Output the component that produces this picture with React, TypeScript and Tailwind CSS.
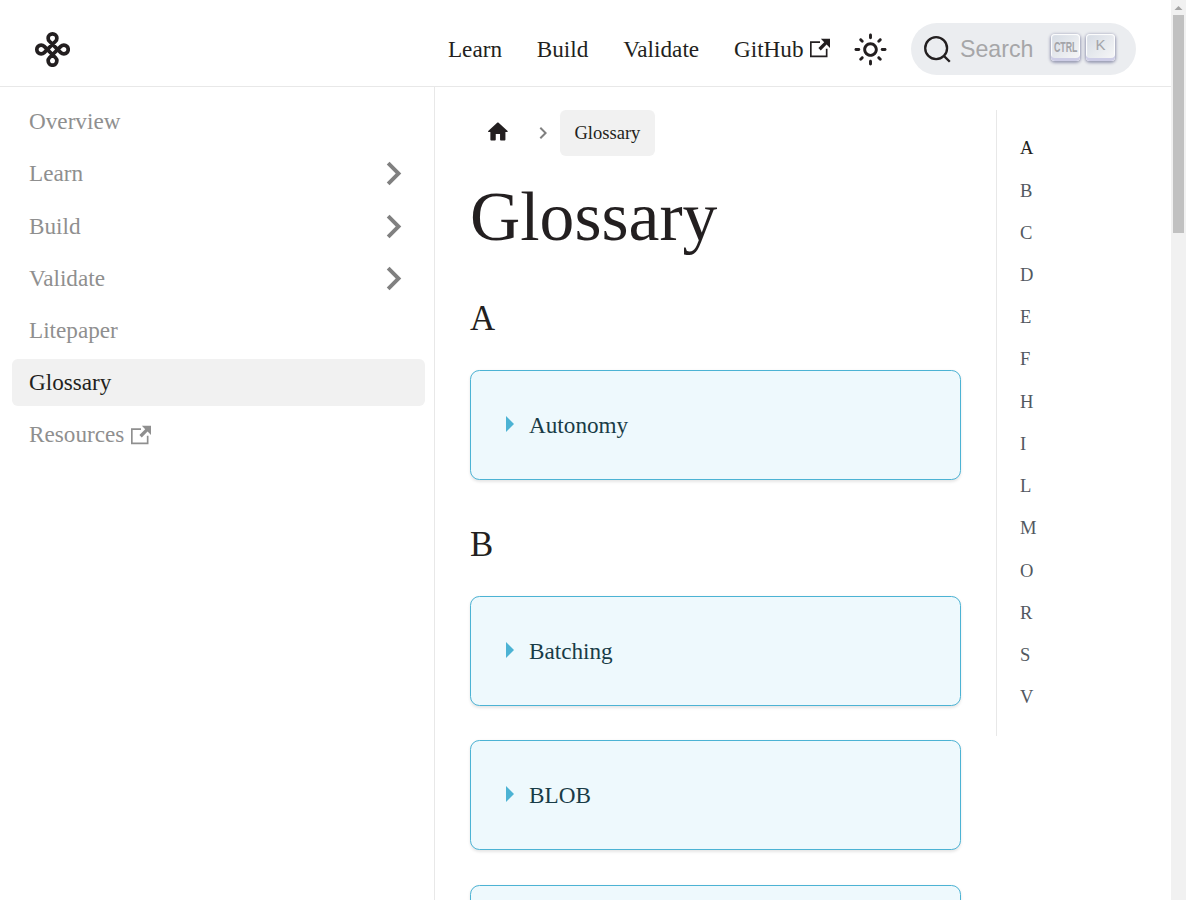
import React from "react";

const SUN =
  "M12,9c1.65,0,3,1.35,3,3s-1.35,3-3,3s-3-1.35-3-3S10.35,9,12,9 M12,7c-2.76,0-5,2.24-5,5s2.24,5,5,5s5-2.24,5-5 S14.76,7,12,7L12,7z M2,13l2,0c0.55,0,1-0.45,1-1s-0.45-1-1-1l-2,0c-0.55,0-1,0.45-1,1S1.45,13,2,13z M20,13l2,0c0.55,0,1-0.45,1-1 s-0.45-1-1-1l-2,0c-0.55,0-1,0.45-1,1S19.45,13,20,13z M11,2v2c0,0.55,0.45,1,1,1s1-0.45,1-1V2c0-0.55-0.45-1-1-1S11,1.45,11,2z M11,20v2c0,0.55,0.45,1,1,1s1-0.45,1-1v-2c0-0.55-0.45-1-1-1C11.45,19,11,19.45,11,20z M5.99,4.58c-0.39-0.39-1.03-0.39-1.41,0 c-0.39,0.39-0.39,1.03,0,1.41l1.06,1.06c0.39,0.39,1.03,0.39,1.41,0s0.39-1.03,0-1.41L5.99,4.58z M18.36,16.95 c-0.39-0.39-1.03-0.39-1.41,0c-0.39,0.39-0.39,1.03,0,1.41l1.06,1.06c0.39,0.39,1.03,0.39,1.41,0c0.39-0.39,0.39-1.03,0-1.41 L18.36,16.95z M19.42,5.99c0.39-0.39,0.39-1.03,0-1.41c-0.39-0.39-1.03-0.39-1.41,0l-1.06,1.06c-0.39,0.39-0.39,1.03,0,1.41 s1.03,0.39,1.41,0L19.42,5.99z M7.05,18.36c0.39-0.39,0.39-1.03,0-1.41c-0.39-0.39-1.03-0.39-1.41,0l-1.06,1.06 c-0.39,0.39-0.39,1.03,0,1.41s1.03,0.39,1.41,0L7.05,18.36z";
const HOME =
  "M10 19v-5h4v5c0 .55.45 1 1 1h3c.55 0 1-.45 1-1v-7h1.7c.46 0 .68-.57.33-.87L12.67 3.6c-.38-.34-.96-.34-1.34 0l-8.36 7.53c-.34.3-.13.87.33.87H5v7c0 .55.45 1 1 1h3c.55 0 1-.45 1-1z";

function Chevron({ className }: { className: string }) {
  return (
    <svg viewBox="0 0 24 24" className={className} fill="currentColor">
      <path d="M8.59 16.59L13.17 12 8.59 7.41 10 6l6 6-6 6-1.41-1.41z" />
    </svg>
  );
}

function ExternalIcon({ className }: { className: string }) {
  return (
    <svg viewBox="0 0 24 24" className={className} fill="currentColor">
      <path d="M21 13v10h-21v-19h12v2h-10v15h17v-8h2zm3-12h-10.988l4.035 4-6.977 7.07 2.828 2.828 6.977-7.07 4.125 4.172v-11z" />
    </svg>
  );
}

function Logo() {
  return (
    <svg viewBox="-18.5 -18.5 36 36" className="h-9 w-9" fill="none" stroke="#231f20" strokeWidth="3.7">
      <path d="M3.07 -8.28 L-8.28 3.07 A4.35 4.35 0 1 1 -8.28 -3.07 L3.07 8.28 A4.35 4.35 0 1 1 -3.07 8.28 L8.28 -3.07 A4.35 4.35 0 1 1 8.28 3.07 L-3.07 -8.28 A4.35 4.35 0 1 1 3.07 -8.28 Z" />
    </svg>
  );
}

function Key({ children }: { children: React.ReactNode }) {
  return (
    <span className="flex h-[27px] w-[29px] justify-center rounded-[4px] bg-gradient-to-tl from-[#f8f8f8] to-[#d5dbe4] pt-[3px] text-[#a3a4a8] shadow-[inset_0_-3px_0_0_#cdcde6,inset_0_0_1px_1px_#fff,0_1px_3px_1px_rgba(30,35,90,0.4)]">
      {children}
    </span>
  );
}

const sidebar = [
  { label: "Overview" },
  { label: "Learn", open: true },
  { label: "Build", open: true },
  { label: "Validate", open: true },
  { label: "Litepaper" },
  { label: "Glossary", active: true },
  { label: "Resources", external: true },
];

const letters = ["A", "B", "C", "D", "E", "F", "H", "I", "L", "M", "O", "R", "S", "V"];

function Term({ name }: { name?: string }) {
  return (
    <div className="mb-[34.4px] flex h-[110px] items-center rounded-[9.4px] border border-[#4cb3d4] bg-[#eef9fd] pl-[35px] text-[#193c47] shadow-[0_1.5px_3px_0_rgba(0,0,0,0.1)]">
      <svg viewBox="0 0 9 16" className="-mt-[2.8px] h-4 w-[9px]">
        <path d="M0 0L8 8L0 16Z" fill="#4cb3d4" />
      </svg>
      {name && <span className="ml-[14px]">{name}</span>}
    </div>
  );
}

export default function App() {
  return (
    <div className="flex h-[900px] w-[1186px] overflow-hidden bg-white font-['Liberation_Serif',serif] text-[23.2px] leading-[29px] text-[#231f20]">
      <div className="flex w-[1171px] flex-col">
        <header className="flex h-[87px] shrink-0 items-center border-b border-[#e8e8e8] pt-3 pr-[35px] pb-0 pl-[34px]">
          <Logo />
          <nav className="ml-auto flex items-center gap-[34.8px]">
            <a>Learn</a>
            <a>Build</a>
            <a>Validate</a>
            <a className="flex items-center">
              GitHub
              <ExternalIcon className="-mt-[3px] ml-[6.5px] h-5 w-5" />
            </a>
          </nav>
          <svg viewBox="0 0 24 24" className="ml-[23px] h-[35px] w-[35px]" fill="currentColor">
            <path d={SUN} />
          </svg>
          <div className="ml-[23px] flex h-[52px] w-[225px] items-center rounded-full bg-[#ebedf0] pl-3 font-['Liberation_Sans',sans-serif]">
            <svg viewBox="0 0 20 20" className="mt-px h-[29px] w-[29px]">
              <path
                d="M14.386 14.386l4.0877 4.0877-4.0877-4.0877c-2.9418 2.9419-7.7115 2.9419-10.6533 0-2.9419-2.9418-2.9419-7.7115 0-10.6533 2.9418-2.9419 7.7115-2.9419 10.6533 0 2.9419 2.9418 2.9419 7.7115 0 10.6533z"
                stroke="#231f20"
                strokeWidth="1.6"
                fill="none"
              />
            </svg>
            <span className="ml-2 w-[91px] text-[#a6a6a8]">Search</span>
            <div className="-mt-[3px] flex gap-[6px]">
              <Key>
                <span className="scale-x-[0.57] text-[15.5px] leading-[20px] font-bold">CTRL</span>
              </Key>
              <Key>
                <span className="-mt-px text-[15px] leading-[17px]">K</span>
              </Key>
            </div>
          </div>
        </header>

        <div className="flex min-h-0 grow">
          <aside className="flex w-[435px] shrink-0 flex-col gap-[5.2px] border-r border-[#e8e8e8] pt-[11.16px] pr-[9px] pl-3">
            {sidebar.map((s) => (
              <div
                key={s.label}
                className={
                  s.active
                    ? "flex h-[47px] shrink-0 items-center rounded-[5.8px] bg-[#f1f1f1] pl-[17px] text-[#231f20]"
                    : "flex h-[47px] shrink-0 items-center pl-[17px] text-[#8f8f8f]"
                }
              >
                {s.label}
                {s.external && <ExternalIcon className="mt-px ml-[6.5px] h-5 w-5" />}
                {s.open && <Chevron className="mr-[8px] ml-auto h-[46.9px] w-[46.9px] text-[#808080]" />}
              </div>
            ))}
          </aside>

          <main className="ml-[35px] w-[491px] shrink-0 pt-[23px]">
            <div className="flex h-[46px] items-center">
              <svg viewBox="0 0 24 24" className="-mt-[3px] ml-[15px] h-[25.8px] w-[25.8px]" fill="currentColor">
                <path d={HOME} />
              </svg>
              <Chevron className="ml-[20px] h-6 w-6 text-[#808080]" />
              <span className="ml-[5px] flex h-[46px] items-center rounded-[5.8px] bg-[#f1f1f1] px-[14.6px] pb-px text-[18.56px]">
                Glossary
              </span>
            </div>
            <h1 className="mt-[17px] text-[69.6px] leading-[88px]">Glossary</h1>
            <h2 className="mt-[36px] mb-[29px] text-[34.8px] leading-[44px]">A</h2>
            <Term name="Autonomy" />
            <h2 className="mt-[43px] mb-[29px] text-[34.8px] leading-[44px]">B</h2>
            <Term name="Batching" />
            <Term name="BLOB" />
            <Term />
          </main>

          <div className="mt-[23px] ml-[35px] flex h-[626px] flex-col gap-[13.24px] border-l border-[#e8e8e8] pt-[23.28px] pl-[23px] text-[18.56px] text-[#525860]">
            {letters.map((l) => (
              <a key={l} className={l === "A" ? "text-[#231f20]" : ""}>
                {l}
              </a>
            ))}
          </div>
        </div>
      </div>

      <div className="flex w-[15px] flex-col items-center bg-[#f1f1f1]">
        <svg viewBox="0 0 15 15" className="h-[15px] w-[15px] shrink-0">
          <path d="M3.5 10L7.5 6L11.5 10Z" fill="#a3a3a3" />
        </svg>
        <div className="h-[218px] w-[11px] bg-[#c1c1c1]" />
      </div>
    </div>
  );
}
